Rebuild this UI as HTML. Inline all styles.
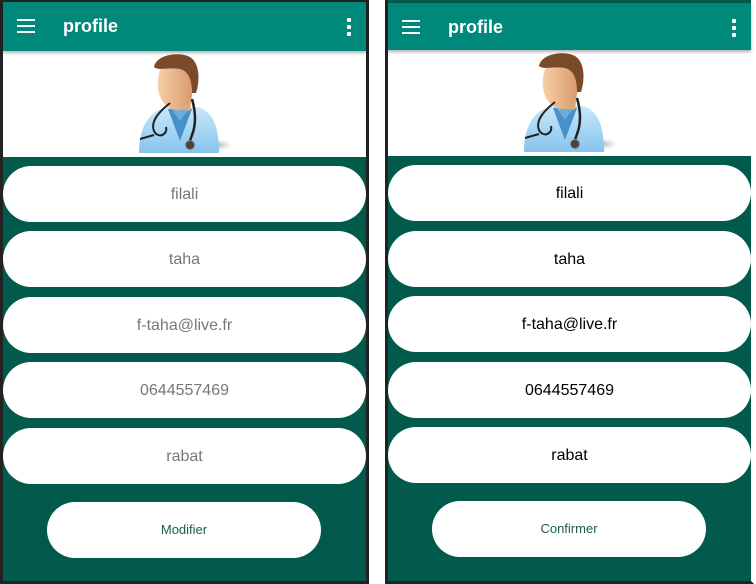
<!DOCTYPE html>
<html><head><meta charset="utf-8"><style>
*{margin:0;padding:0;box-sizing:border-box}
body{width:756px;height:584px;background:#fff;position:relative;overflow:hidden;font-family:"Liberation Sans",Roboto,sans-serif}
.panel{position:absolute;background:#025a4c;border:3px solid #222;}
.bar{position:absolute;left:0;right:0;top:0;height:49px;background:#00897b;box-shadow:0 2px 3px rgba(0,0,0,.3);z-index:2}
.bar .t{position:absolute;left:60px;top:14px;color:#fff;font-weight:bold;font-size:18px}
.ham{position:absolute;left:14px;top:17px;width:18px}
.ham i{display:block;height:2px;background:#fff;margin-bottom:4px}
.dots{position:absolute;right:15px;top:16px;width:4px}
.dots i{display:block;width:4px;height:4px;background:#fff;border-radius:1px;margin-bottom:3px}
.hdr{position:absolute;left:0;right:0;height:106px;background:#fff}
.f{position:absolute;left:0;height:56px;background:#fff;border-radius:28px;text-align:center;line-height:58px;font-size:16px}
.btn{position:absolute;height:56px;width:274px;background:#fff;border-radius:28px;text-align:center;line-height:56px;font-size:13px;color:#1b5e50}
</style></head><body>
<svg width="0" height="0" style="position:absolute"><defs>
<linearGradient id="fc" x1="0" x2="1"><stop offset="0" stop-color="#f7cfa8"/><stop offset="1" stop-color="#d8986a"/></linearGradient>
<linearGradient id="cl" x1="0" y1="0" x2="0" y2="1"><stop offset="0" stop-color="#c8e8fc"/><stop offset="1" stop-color="#86c4ec"/></linearGradient>
<radialGradient id="sh"><stop offset="0" stop-color="#000" stop-opacity=".35"/><stop offset="1" stop-color="#000" stop-opacity="0"/></radialGradient>
<g id="doc">
<ellipse cx="78" cy="92" rx="20" ry="6" fill="url(#sh)"/>
<path d="M5 100 C5 70 18 58 32 54 L64 54 C78 58 85 72 85 100 Z" fill="url(#cl)"/>
<path d="M34 56 L46 88 L58 56 Z" fill="#4a90c8"/>
<path d="M36 54 L46 68 L56 54 Z" fill="#6aaee0"/>
<path d="M36 42 L36 55 L56 58 L58 42Z" fill="#e0a878"/>
<path d="M24 36 C22 14 32 6 44 6 C58 6 62 22 58 42 C55 54 47 58 42 57 C32 55 26 48 24 36Z" fill="url(#fc)"/>
<path d="M20 14 C22 2 44 -2 56 4 C66 10 66 28 62 40 L58 40 C58 26 54 18 46 16 C34 14 24 18 20 14Z" fill="#7a4a2a"/>
<path d="M58 46 C62 60 62 72 58 82 L56 88" stroke="#222" stroke-width="2.5" fill="none"/>
<circle cx="56" cy="92" r="4.5" fill="#444" stroke="#888"/>
<path d="M36 50 C26 58 16 68 20 78 C24 86 34 82 32 74" stroke="#222" stroke-width="2" fill="none"/>
<path d="M6 86 L20 82" stroke="#222" stroke-width="2"/>
</g></defs></svg>

<div class="panel" style="left:0;top:-1px;width:369px;height:585px">
 <div class="bar"><div class="ham"><i></i><i></i><i></i></div><div class="t">profile</div><div class="dots"><i></i><i></i><i></i></div></div>
 <div class="hdr" style="top:49px"><svg width="100" height="104" style="position:absolute;left:131px;top:2px"><use href="#doc"/></svg></div>
 <div class="f" style="top:164px;width:363px;color:#777">filali</div>
 <div class="f" style="top:229px;width:363px;color:#777">taha</div>
 <div class="f" style="top:295px;width:363px;color:#777">f-taha@live.fr</div>
 <div class="f" style="top:360px;width:363px;color:#777">0644557469</div>
 <div class="f" style="top:426px;width:363px;color:#777">rabat</div>
 <div class="btn" style="left:44px;top:500px">Modifier</div>
</div>
<div class="panel" style="left:385px;top:-3px;width:369px;height:587px;border-right-color:#fff">
 <div class="bar" style="top:3px;height:47px"><div class="ham"><i></i><i></i><i></i></div><div class="t">profile</div><div class="dots"><i></i><i></i><i></i></div></div>
 <div class="hdr" style="top:50px"><svg width="100" height="104" style="position:absolute;left:131px;top:2px"><use href="#doc"/></svg></div>
 <div class="f" style="top:165px;width:363px;color:#000">filali</div>
 <div class="f" style="top:231px;width:363px;color:#000">taha</div>
 <div class="f" style="top:296px;width:363px;color:#000">f-taha@live.fr</div>
 <div class="f" style="top:362px;width:363px;color:#000">0644557469</div>
 <div class="f" style="top:427px;width:363px;color:#000">rabat</div>
 <div class="btn" style="left:44px;top:501px">Confirmer</div>
</div>
</body></html>
